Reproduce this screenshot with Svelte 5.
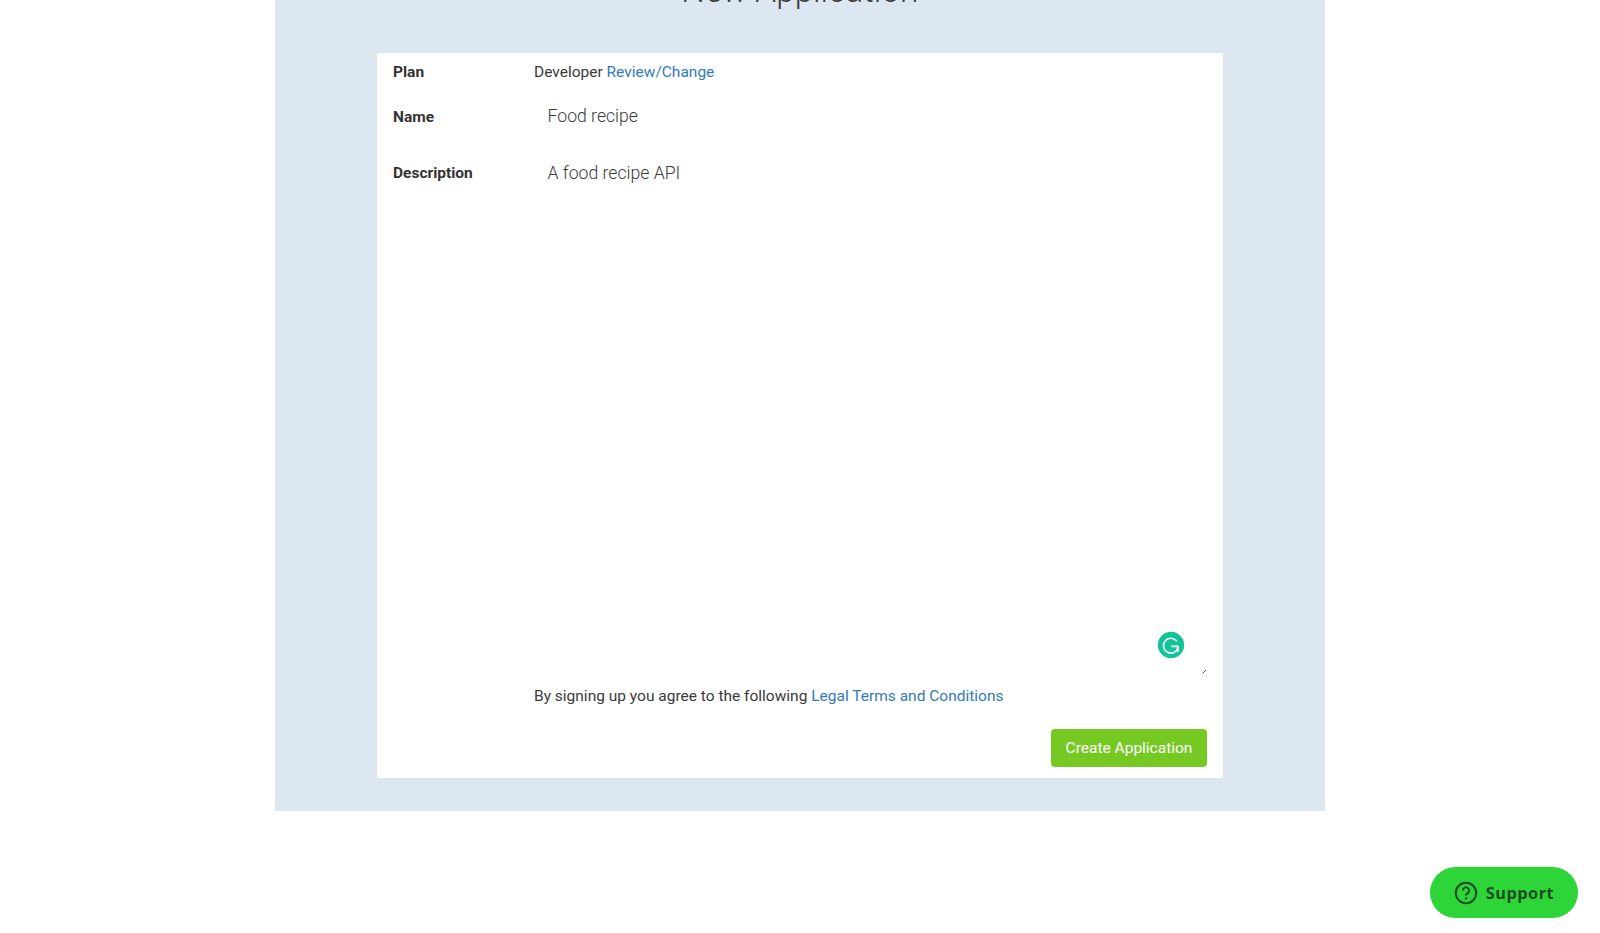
<script>
  const plan = 'Developer';
  const name = 'Food recipe';
  const description = 'A food recipe API';
</script>

<div class="page">
  <section class="panel">
    <h1>New Application</h1>
    <form class="card">
      <div class="row plan">
        <div class="label">Plan</div>
        <div class="value">{plan} <a href="#plan">Review/Change</a></div>
      </div>
      <div class="row name">
        <div class="label">Name</div>
        <div class="input name-input">{name}</div>
      </div>
      <div class="row desc">
        <div class="label">Description</div>
        <div class="input area">
          {description}
          <span class="grammarly">
            <svg viewBox="0 0 28 28" width="28" height="28">
              <circle cx="14" cy="14" r="13.2" fill="#15c39a" />
              <path d="M19.4 9.8A7.4 7.4 0 1 0 21 16.6" fill="none" stroke="#fff" stroke-width="1.6" stroke-linecap="round" />
              <path d="M15 15.4H21M21 15.4V20.4" fill="none" stroke="#fff" stroke-width="1.6" stroke-linecap="round" />
            </svg>
          </span>
          <svg class="grip" viewBox="0 0 5 5" width="5" height="5">
            <path d="M0.6 4.4L4 1" stroke="#555" stroke-width="1" />
          </svg>
        </div>
      </div>
      <div class="terms">By signing up you agree to the following <a href="#terms">Legal Terms and Conditions</a></div>
      <div class="actions">
        <button type="button">Create Application</button>
      </div>
    </form>
  </section>

  <button type="button" class="support">
    <svg viewBox="0 0 24 24" width="24" height="24">
      <circle cx="12" cy="12" r="10.2" fill="none" stroke="#1d4d24" stroke-width="2" />
      <path d="M8.9 9.4a3.1 3.1 0 1 1 4.7 2.7c-1 .6-1.6 1.2-1.6 2.3" fill="none" stroke="#1d4d24" stroke-width="2" />
      <circle cx="12" cy="17.4" r="1.2" fill="#1d4d24" />
    </svg>
    <span>Support</span>
  </button>
</div>

<style>
  :global(body) {
    margin: 0;
    background: #fff;
    font-family: Roboto, "Liberation Sans", sans-serif;
    color: #3a3a3a;
    overflow: hidden;
  }

  .page {
    height: 933px;
    overflow: hidden;
  }

  .panel {
    width: 1050px;
    margin: 0 0 0 275px;
    padding: 0 102px 33px 101.5px;
    box-sizing: border-box;
    background: #dde7f1;
  }

  h1 {
    margin: 0;
    height: 53px;
    box-sizing: border-box;
    font-size: 33.3px;
    font-weight: 300;
    line-height: 40px;
    text-align: center;
    color: #3a3a3a;
    transform: translateY(-29px);
  }

  .card {
    background: #fff;
    height: 725px;
    box-sizing: border-box;
    padding: 0 16px 11px 16.5px;
    display: flex;
    flex-direction: column;
    font-size: 15.5px;
  }

  .row {
    display: flex;
  }

  .label {
    width: 141px;
    flex: none;
    font-weight: 700;
    font-size: 15.5px;
    line-height: 20px;
    color: #333;
  }

  .plan {
    padding-top: 9px;
    line-height: 20px;
  }

  .name {
    padding-top: 25px;
    height: 32px;
  }

  .input {
    padding-left: 13.5px;
    font-size: 17.65px;
    font-weight: 300;
    line-height: 20px;
    flex: 1;
  }

  .name-input {
    margin-top: -1px;
  }

  .desc {
    padding-top: 24px;
    height: 510px;
  }

  .area {
    position: relative;
  }

  .grammarly {
    position: absolute;
    right: 22px;
    bottom: 14px;
    width: 28px;
    height: 28px;
  }

  .grip {
    position: absolute;
    right: 0;
    bottom: -1px;
  }

  a {
    color: #337ab7;
    text-decoration: none;
  }

  .terms {
    margin-top: 13px;
    padding-left: 141px;
    line-height: 20px;
  }

  .actions {
    margin-top: auto;
    display: flex;
    justify-content: flex-end;
  }

  .actions button {
    background: #76c922;
    color: #fff;
    border: 0;
    border-radius: 4px;
    height: 38px;
    width: 156px;
    font: 400 15.5px Roboto, sans-serif;
    padding: 0;
  }

  .support {
    position: fixed;
    left: 1430px;
    top: 867px;
    width: 148px;
    height: 51px;
    border: 0;
    border-radius: 26px;
    background: #2ed539;
    color: #1d4d24;
    display: flex;
    align-items: center;
    justify-content: center;
    gap: 8px;
    padding: 0;
    font: 700 16.3px "Open Sans", sans-serif;
    letter-spacing: 0.5px;
  }
</style>
